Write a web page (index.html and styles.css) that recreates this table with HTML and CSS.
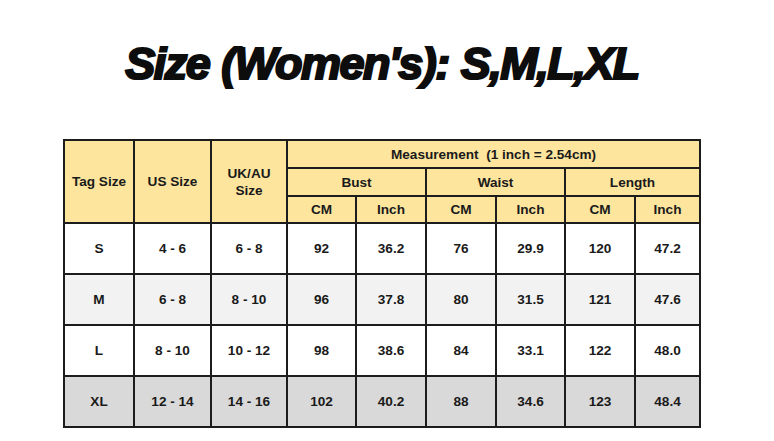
FILE: index.html
```html
<!DOCTYPE html>
<html>
<head>
<meta charset="utf-8">
<link rel="stylesheet" href="styles.css">
</head>
<body>
<h1 class="title">Size (Women's): S,M,L,XL</h1>
<table class="chart">
  <colgroup>
    <col class="c70"><col class="c77"><col class="c76">
    <col class="c69"><col class="c70"><col class="c70"><col class="c69"><col class="c70"><col class="c65">
  </colgroup>
  <thead>
    <tr class="h1">
      <th rowspan="3">Tag Size</th>
      <th rowspan="3">US Size</th>
      <th rowspan="3">UK/AU<br>Size</th>
      <th colspan="6">Measurement&nbsp; (1 inch = 2.54cm)</th>
    </tr>
    <tr class="h2">
      <th colspan="2">Bust</th>
      <th colspan="2">Waist</th>
      <th colspan="2">Length</th>
    </tr>
    <tr class="h3">
      <th>CM</th><th>Inch</th><th>CM</th><th>Inch</th><th>CM</th><th>Inch</th>
    </tr>
  </thead>
  <tbody>
    <tr class="row white"><td>S</td><td>4 - 6</td><td>6 - 8</td><td>92</td><td>36.2</td><td>76</td><td>29.9</td><td>120</td><td>47.2</td></tr>
    <tr class="row light"><td>M</td><td>6 - 8</td><td>8 - 10</td><td>96</td><td>37.8</td><td>80</td><td>31.5</td><td>121</td><td>47.6</td></tr>
    <tr class="row white"><td>L</td><td>8 - 10</td><td>10 - 12</td><td>98</td><td>38.6</td><td>84</td><td>33.1</td><td>122</td><td>48.0</td></tr>
    <tr class="row grey"><td>XL</td><td>12 - 14</td><td>14 - 16</td><td>102</td><td>40.2</td><td>88</td><td>34.6</td><td>123</td><td>48.4</td></tr>
  </tbody>
</table>
</body>
</html>
```
FILE: styles.css
```css
html, body {
  margin: 0;
  padding: 0;
  background: #ffffff;
}
body {
  width: 774px;
  height: 441px;
  overflow: hidden;
  font-family: "Liberation Sans", Arial, sans-serif;
  color: #1a1a1a;
}
.title {
  margin: 0;
  padding-top: 38px;
  height: 102px;
  box-sizing: border-box;
  text-align: center;
  padding-right: 10px;
  font-family: "Liberation Sans", Arial, sans-serif;
  font-size: 45px;
  font-weight: 700;
  font-style: italic;
  line-height: 52px;
  color: #0d0d0d;
  -webkit-text-stroke: 2.2px #0d0d0d;
  letter-spacing: -1.5px;
  word-spacing: 1px;
}
.chart {
  margin-left: 63px;
  margin-top: 37px;
  border-collapse: collapse;
  table-layout: fixed;
  width: 638px;
}
.c70 { width: 70px; }
.c77 { width: 77px; }
.c76 { width: 76px; }
.c69 { width: 69px; }
.c65 { width: 65px; }
.chart th, .chart td {
  border: 2px solid #1c1c1c;
  padding: 0;
  text-align: center;
  vertical-align: middle;
  font-size: 13.6px;
  font-weight: 700;
  color: #1a1a1a;
}
.chart th {
  background: #fde59e;
  line-height: 17px;
}
.h1 th { height: 26px; }
.h2 th { height: 26px; }
.h3 th { height: 25px; }
.row td { height: 49px; }
.white td { background: #ffffff; }
.light td { background: #f2f2f2; }
.grey td { background: #d9d9d9; }
```
